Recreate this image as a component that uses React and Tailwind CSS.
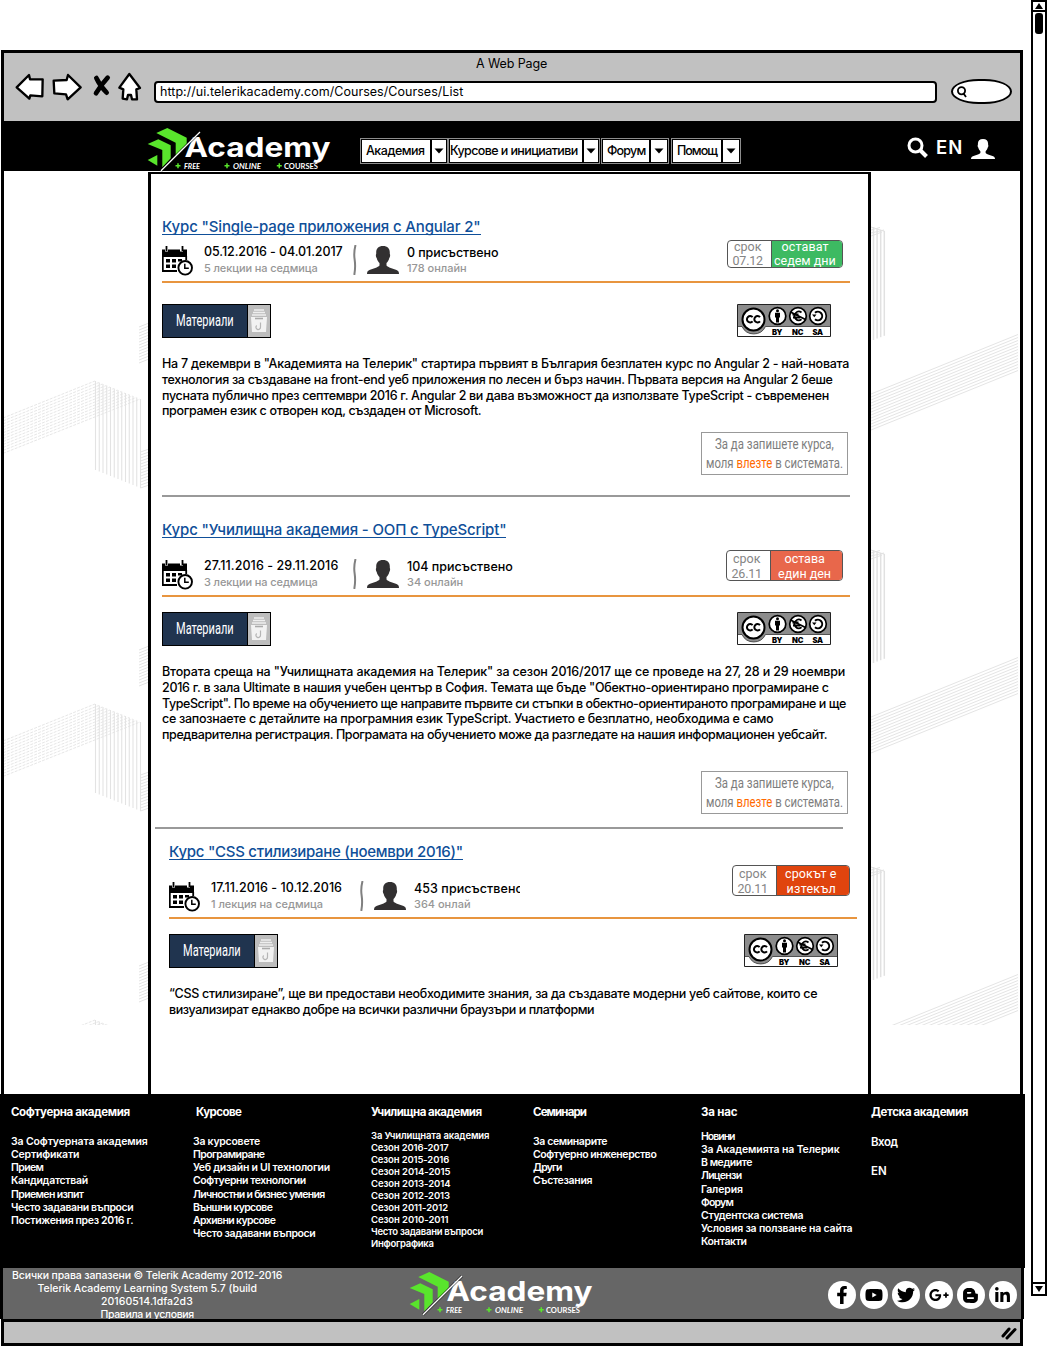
import React, { useLayoutEffect, useRef, useState } from "react";
import {
  FaFacebookF,
  FaYoutube,
  FaTwitter,
  FaGooglePlusG,
  FaBloggerB,
  FaLinkedinIn,
} from "react-icons/fa";

/* A single line of text tracked (or squeezed) to an exact width. */
function Fit({ w, squeeze = false, className = "", children }) {
  const ref = useRef(null);
  const [style, setStyle] = useState({});
  useLayoutEffect(() => {
    const el = ref.current;
    const natural = el.offsetWidth;
    const count = el.textContent.length;
    if (squeeze) setStyle({ transform: `scaleX(${w / natural})` });
    else setStyle({ letterSpacing: `${(w - natural) / count}px` });
  }, [w, squeeze]);
  return (
    <span className={`block whitespace-nowrap ${className}`} style={{ width: w }}>
      <span ref={ref} className="inline-block origin-left align-top" style={style}>
        {children}
      </span>
    </span>
  );
}

function Logo() {
  return (
    <svg width="186" height="46" viewBox="-1 0 186 46" className="block shrink-0">
      <g fill="#59e52c">
        <path d="M8.3 6 19.3 1 38.700 10.700V17L28.700 28H27.700V15.700Z" />
        <path d="M-.3 17 10.300 12.300 22.700 18.300V31.300L14.300 40.300V23Z" />
        <path d="M-.3 33 9.300 28V38.700Z" />
        <path d="M30 36.200v5M27.500 38.700h5M79 36.200v5M76.500 38.700h5M131.300 36.200v5M128.800 38.700h5" stroke="#59e52c" strokeWidth="1.500" />
      </g>
      <g fill="#fff" fontFamily="Lato, sans-serif" fontWeight="700">
        <text x="36.500" y="29.700" fontFamily="Inter, sans-serif" fontSize="27" textLength="146" lengthAdjust="spacingAndGlyphs">Academy</text>
        <g fontSize="8" fontStyle="italic">
          <text x="36" y="41.700" textLength="16" lengthAdjust="spacingAndGlyphs">FREE</text>
          <text x="85" y="41.700" textLength="28" lengthAdjust="spacingAndGlyphs">ONLINE</text>
        </g>
        <text x="136" y="41.700" fontSize="8" textLength="34" lengthAdjust="spacingAndGlyphs">COURSES</text>
      </g>
      <path d="M52 5 13 43.700" stroke="#000" strokeWidth="3" opacity=".5" />
      <path d="M52 5 13 43.700" stroke="#fff" strokeWidth="1.200" />
    </svg>
  );
}

function ToolbarIcons() {
  return (
    <svg width="130" height="30" viewBox="45 96 390 90" className="block">
      <g fill="#fff" stroke="#000" strokeWidth="7" strokeLinejoin="round" strokeLinecap="round">
        <path d="M50 142 87 105 90 118 128 118 127 169 91 166 88 176Z" />
        <path d="M161 122 200 120 204 105 242 142 203 178 198 163 163 160Z" />
        <path d="M388 102 420 144 409 148 411 178 396 178 393 165 384 165 381 178 368 176 370 148 358 143Z" />
      </g>
      <path d="M289 114Q300 138 320 158M323 113Q305 132 288 160" fill="none" stroke="#000" strokeWidth="14" strokeLinecap="round" />
    </svg>
  );
}

function Caret() {
  return (
    <svg width="10" height="6" viewBox="0 0 10 6">
      <path d="M.5.5h9L5 5.500Z" />
    </svg>
  );
}

function Menu({ label, w, className, cell }) {
  return (
    <div className={`flex h-[26px] gap-[2px] border border-[#8c8c8c] bg-black p-px ${className}`}>
      <div className={`flex items-center bg-white ${cell}`}>
        <Fit w={w} className="text-[12.5px] leading-[22px] font-medium">{label}</Fit>
      </div>
      <div className="flex flex-1 items-center justify-center bg-white">
        <Caret />
      </div>
    </div>
  );
}

function Calendar() {
  return (
    <svg width="31" height="30" viewBox="0 0 31 30" className="block shrink-0">
      <path d="M0 3.500h3v2h3v-2h12v2h3v-2h4V11H0Z" />
      <path d="M4.500 0v5M20.500 0v5" stroke="#000" strokeWidth="1.800" />
      <path d="M.8 10v15H15M24.200 10v4" fill="none" stroke="#000" strokeWidth="1.800" />
      <path d="M4 13h4v3.500H4zM10 13h4v3.500h-4zM16 13h4v2.500h-4zM4 18.500h4V22H4zM10 18.500h4V22h-4z" />
      <circle cx="23.200" cy="21.800" r="6.800" fill="#fff" stroke="#000" strokeWidth="1.900" />
      <path d="M22.800 17.800V22.300h4" fill="none" stroke="#000" strokeWidth="1.500" />
    </svg>
  );
}

function Person({ className }) {
  return (
    <svg viewBox="0 0 32 28" preserveAspectRatio="none" className={className} fill="currentColor">
      <path d="M16 0C20.500 0 22.800 2.500 22.800 6.500V8C23.400 8.500 23.200 11 22.300 12C21.800 14.500 20.500 16 19.500 17V19.500C21 21.500 26 22.500 29.500 24C31.500 24.900 32 26 32 28H0C0 26 .5 24.900 2.500 24C6 22.500 11 21.500 12.500 19.500V17C11.500 16 10.200 14.500 9.700 12C8.800 11 8.600 8.500 9.200 8V6.500C9.200 2.500 11.500 0 16 0Z" />
    </svg>
  );
}

function Materials() {
  return (
    <div className="flex h-[34px] w-[109px] border border-black bg-[#bdbdbd]">
      <div className="flex w-[85px] items-center border-r border-black bg-[#20344f] pl-[13px] text-white">
        <Fit w={58} squeeze className="font-['Roboto'] text-[16px] leading-[32px]">Материали</Fit>
      </div>
      <div className="flex flex-1 items-center justify-center">
        <svg width="18" height="24" viewBox="0 0 18 24">
          <path d="M4 1h10M3 3.500h12M2 6h14" stroke="#eee" strokeWidth="1.300" />
          <path d="M1 8h16L16 23H2Z" fill="#f2f2f2" />
          <path d="M5 9.500h8" stroke="#aaa" strokeWidth="1.600" />
          <path d="M10.500 13.500v4.500a2.300 2.300 0 1 1-3.800-1.500" fill="none" stroke="#b5b5b5" strokeWidth="1.200" />
        </svg>
      </div>
    </div>
  );
}

function License() {
  return (
    <svg width="94" height="33" viewBox="0 0 94 33" className="block">
      <path d="M.5.5h93v32H.5Z" fill="#fff" stroke="#222" />
      <path d="M1 1h92v21.500H28.500A13 13 0 0 1 5 22.500H1Z" fill="#8c8c8c" />
      <path d="M1 22.500H5A13 13 0 0 0 28.500 22.500H93" fill="none" stroke="#333" strokeWidth=".8" />
      <g fill="#fff" stroke="#000">
        <circle cx="16.500" cy="15.500" r="11" strokeWidth="2" />
        <circle cx="40.500" cy="12" r="8.300" strokeWidth="1.700" />
        <circle cx="61" cy="12" r="8.300" strokeWidth="1.700" />
        <circle cx="81" cy="12" r="8.300" strokeWidth="1.700" />
      </g>
      <g fill="none" stroke="#000" strokeWidth="2">
        <path d="M15.600 13.200A3.200 3.200 0 1 0 15.600 17.300M23 13.200A3.200 3.200 0 1 0 23 17.300" />
        <path d="M64.500 8.500A4.300 4.300 0 1 0 64.500 15.300M55.500 10.500h6M56 13.500h7" strokeWidth="1.800" />
        <path d="M53.500 8 68.500 15.500" strokeWidth="1.800" />
        <path d="M78 8.800A4.300 4.300 0 1 1 78 15.200" />
      </g>
      <circle cx="40.500" cy="6.700" r="1.500" />
      <path d="M38 8.800h5v4.700h-1V18.500h-3V13.500h-1Z" />
      <path d="M75 10.500h4.500l-2.200 2.800Z" />
      <g fontFamily="Inter, sans-serif" fontWeight="900" fontSize="7.600">
        <text x="35" y="30.500" textLength="10.500">BY</text>
        <text x="55" y="30.500" textLength="11.500">NC</text>
        <text x="75.500" y="30.500" textLength="10.500">SA</text>
      </g>
    </svg>
  );
}

function Deadline({ date, dateW, l1, w1, l2, w2, tone, className }) {
  return (
    <div className={`ml-auto flex overflow-hidden rounded-[4px] border border-[#555] bg-white font-['Roboto'] text-[12.5px] ${className}`}>
      <div className="flex w-[43px] flex-col items-center justify-center pr-[4px] text-[#858585]">
        <Fit w={27}>срок</Fit>
        <Fit w={dateW}>{date}</Fit>
      </div>
      <div className={`flex flex-1 flex-col items-center justify-center border-l border-[#555] pr-[4px] text-white ${tone}`}>
        <Fit w={w1}>{l1}</Fit>
        <Fit w={w2}>{l2}</Fit>
      </div>
    </div>
  );
}

function Course({ c }) {
  return (
    <section className={`flex w-[688px] flex-col ${c.pos}`}>
      <Fit w={c.titleW} className="h-[16px] border-b border-[#0f4f99] text-[15px] leading-[15px] font-medium text-[#0f4f99]">
        {c.title}
      </Fit>
      <div className={`flex h-[32px] ${c.metaGap}`}>
        <div className="pt-[2px]">
          <Calendar />
        </div>
        <div className="ml-[11px] w-[150px]">
          <Fit w={c.dateW} className="text-[12.5px] leading-[15px] font-medium">{c.date}</Fit>
          <Fit w={c.freqW} className="pt-[2px] text-[11px] leading-[15px] font-medium text-[#979797]">{c.freq}</Fit>
        </div>
        <svg width="4" height="30" viewBox="0 0 4 30" className="-ml-[1px] mt-[1px] block">
          <path d="M2.500 0Q.5 8 1.700 15Q2.700 22 1.300 30" fill="none" stroke="#808080" strokeWidth="2" />
        </svg>
        <Person className="mt-[2px] ml-[10px] h-[28px] w-[32px] text-[#323031]" />
        <div className="ml-[8px] pt-[1px]">
          <Fit w={c.liveW} className={`text-[12.5px] leading-[15px] font-medium ${c.liveClip || ""}`}>{c.live}</Fit>
          <Fit w={c.onlineW} className="pt-px text-[11px] leading-[15px] font-medium text-[#979797]">{c.online}</Fit>
        </div>
        <Deadline {...c.deadline} />
      </div>
      <div className="mt-[5px] h-[2px] bg-[#e8953f]" />
      <div className={`flex items-start justify-between pr-[19px] ${c.actionsGap}`}>
        <Materials />
        <License />
      </div>
      <div className="mt-[18px] text-[12.5px] leading-[15.75px] font-medium">
        {c.lines.map(([text, w]) => (
          <Fit key={text} w={w}>{text}</Fit>
        ))}
      </div>
      {c.enrollGap && (
        <>
          <div className={`mr-[2px] flex h-[43px] w-[147px] flex-col items-center justify-center self-end border border-[#999] font-['Roboto'] text-[15px] leading-[18.500px] text-[#7d7d7d] ${c.enrollGap}`}>
            <Fit w={119} squeeze>За да запишете курса,</Fit>
            <Fit w={137} squeeze>
              моля <b className="font-normal text-[#ff6a00]">влезте</b> в системата.
            </Fit>
          </div>
          <div className={`h-[2px] bg-[#999] ${c.ruleGap}`} />
        </>
      )}
    </section>
  );
}

const courses = [
  {
    pos: "ml-[11px] mt-[45px]",
    title: 'Курс "Single-page приложения с Angular 2"',
    titleW: 319,
    metaGap: "mt-[9px]",
    date: "05.12.2016 - 04.01.2017",
    dateW: 139,
    freq: "5 лекции на седмица",
    freqW: 114,
    live: "0 присъствено",
    liveW: 91,
    online: "178 онлайн",
    onlineW: 60,
    deadline: { date: "07.12", dateW: 30, l1: "остават", w1: 47, l2: "седем дни", w2: 62, tone: "bg-[#3dba62]", className: "-mt-[4px] mr-[7px] h-[28px] w-[116px] leading-[14px]" },
    actionsGap: "mt-[21px]",
    lines: [
      ['На 7 декември в "Академията на Телерик" стартира първият в България безплатен курс по Angular 2 - най-новата', 687],
      ["технология за създаване на front-end уеб приложения по лесен и бърз начин. Първата версия на Angular 2 беше", 671],
      ["пусната публично през септември 2016 г. Angular 2 ви дава възможност да използвате TypeScript - съвременен", 667],
      ["програмен език с отворен код, създаден от Microsoft.", 319],
    ],
    enrollGap: "mt-[13px]",
    ruleGap: "mt-[20px]",
  },
  {
    pos: "ml-[11px] mt-[25px]",
    title: 'Курс "Училищна академия - ООП с TypeScript"',
    titleW: 344,
    metaGap: "mt-[20px]",
    date: "27.11.2016 - 29.11.2016",
    dateW: 134,
    freq: "3 лекции на седмица",
    freqW: 114,
    live: "104 присъствено",
    liveW: 106,
    online: "34 онлайн",
    onlineW: 56,
    deadline: { date: "26.11", dateW: 30, l1: "остава", w1: 40, l2: "един ден", w2: 53, tone: "bg-[#e8674b]", className: "-mt-[8px] mr-[7px] h-[31px] w-[117px] leading-[15px]" },
    actionsGap: "mt-[15px]",
    lines: [
      ['Втората среща на "Училищната академия на Телерик" за сезон 2016/2017 ще се проведе на 27, 28 и 29 ноември', 683],
      ['2016 г. в зала Ultimate в нашия учебен център в София. Темата ще бъде "Обектно-ориентирано програмиране с', 667],
      ['TypeScript". По време на обучението ще направите първите си стъпки в обектно-ориентираното програмиране и ще', 684],
      ["се запознаете с детайлите на програмния език TypeScript. Участието е безплатно, необходима е само", 611],
      ["предварителна регистрация. Програмата на обучението може да разгледате на нашия информационен уебсайт.", 665],
    ],
    enrollGap: "mt-[28.25px]",
    ruleGap: "mt-[13px] relative -left-[7px]",
  },
  {
    pos: "ml-[18px] mt-[15px]",
    title: 'Курс "CSS стилизиране (ноември 2016)"',
    titleW: 294,
    metaGap: "mt-[20px]",
    date: "17.11.2016 - 10.12.2016",
    dateW: 131,
    freq: "1 лекция на седмица",
    freqW: 112,
    live: "453 присъствено",
    liveW: 109,
    liveClip: "max-w-[106px] overflow-hidden",
    online: "364 онлай",
    onlineW: 57,
    deadline: { date: "20.11", dateW: 30, l1: "срокът е", w1: 52, l2: "изтекъл", w2: 49, tone: "bg-[#e0440e]", className: "-mt-[15px] mr-[7px] h-[31px] w-[118px] leading-[15px]" },
    actionsGap: "mt-[15px]",
    lines: [
      ["“CSS стилизиране”, ще ви предостави необходимите знания, за да създавате модерни уеб сайтове, които се", 648],
      ["визуализират еднакво добре на всички различни браузъри и платформи", 425],
    ],
  },
];

const steps = Array.from({ length: 13 }, (_, i) => i);

/* Hatched ribbons repeated down the left margin. */
function LeftPattern() {
  return (
    <svg width="144" height="854" viewBox="4 171 144 854" className="block shrink-0" fill="none" stroke="#e3e3e3">
      {[0, 323, 639].map((dy) => (
        <g key={dy} transform={`translate(0 ${dy})`}>
          {steps.map((i) => (
            <g key={i}>
              <path d={`M3 ${418 + i * 2.95}L${95 + i * 3.75} ${381 + i * 1.5}`} strokeDasharray="3 1.2" strokeWidth=".9" />
              <path d={`M${95.5 + i * 3.75} ${381 + i * 1.5}V${470 + i * 1.5}`} strokeWidth="1.1" />
              <path d={`M139 ${327 + i * 3}L149 ${323 + i * 3}`} />
              <path d={`M140.5 ${452 + i * 3}L149 ${449 + i * 3}`} />
            </g>
          ))}
        </g>
      ))}
    </svg>
  );
}

/* Hatched ribbons repeated down the right margin. */
function RightPattern() {
  return (
    <svg width="149" height="854" viewBox="871 171 149 854" className="block shrink-0" fill="none" stroke="#e1e1e1">
      {[0, 323, 640].map((dy) => (
        <g key={dy} transform={`translate(0 ${dy})`}>
          {steps.map((i) => (
            <path key={i} d={`M871 ${394 + i * 3}L1018 ${334.5 + i * 3}`} strokeWidth=".9" />
          ))}
          {[0, 1, 2, 3].map((i) => (
            <path key={i} d={`M${873.5 + i * 3.6} ${227 + i * 1.4}V${340 - i * 1.4}`} strokeWidth="1.5" />
          ))}
          <path d="M871 227 885 231.500M871 230 880 227.500M871 233 884 230M871 236 882 232" />
        </g>
      ))}
    </svg>
  );
}

const columns = [
  {
    head: ["Софтуерна академия", 119],
    list: "pt-[15px] text-[10.5px] leading-[13.15px]",
    items: [["За Софтуерната академия", 137], ["Сертификати", 68], ["Прием", 32], ["Кандидатствай", 77], ["Приемен изпит", 72], ["Често задавани въпроси", 122], ["Постижения през 2016 г.", 122]],
  },
  {
    head: ["Курсове", 45],
    headCls: "pl-[3px]",
    list: "pt-[15px] text-[10.5px] leading-[13.15px]",
    items: [["За курсовете", 67], ["Програмиране", 71], ["Уеб дизайн и UI технологии", 137], ["Софтуерни технологии", 113], ["Личностни и бизнес умения", 132], ["Външни курсове", 79], ["Архивни курсове", 82], ["Често задавани въпроси", 122]],
  },
  {
    head: ["Училищна академия", 111],
    list: "pt-[10px] text-[9.5px] leading-[12px]",
    items: [["За Училищната академия", 118], ["Сезон 2016-2017", 78], ["Сезон 2015-2016", 78], ["Сезон 2014-2015", 79], ["Сезон 2013-2014", 79], ["Сезон 2012-2013", 79], ["Сезон 2011-2012", 77], ["Сезон 2010-2011", 77], ["Често задавани въпроси", 112], ["Инфографика", 63]],
  },
  {
    head: ["Семинари", 53],
    list: "pt-[15px] text-[10.5px] leading-[13.15px]",
    items: [["За семинарите", 74], ["Софтуерно инженерство", 123], ["Други", 29], ["Състезания", 59]],
  },
  {
    head: ["За нас", 36],
    list: "pt-[10px] text-[10.5px] leading-[13.15px]",
    items: [["Новини", 34], ["За Академията на Телерик", 138], ["В медиите", 51], ["Лицензи", 40], ["Галерия", 42], ["Форум", 32], ["Студентска система", 102], ["Условия за ползване на сайта", 151], ["Контакти", 46]],
  },
  {
    head: ["Детска академия", 97],
    list: "pt-[8px] text-[11.5px] leading-[29px]",
    items: [["Вход", 26], ["EN", 16]],
  },
];

const socials = [
  [FaFacebookF, "size-[18px]"],
  [FaYoutube, "size-[18px]"],
  [FaTwitter, "size-[18px]"],
  [FaGooglePlusG, "size-[20px]"],
  [FaBloggerB, "size-[17px]"],
  [FaLinkedinIn, "size-[17px]"],
];

export default function App() {
  return (
    <div className="flex h-[1346px] w-[1047px] overflow-hidden bg-white font-['Inter',sans-serif] text-black">
      <div className="flex w-[1025px] shrink-0 flex-col pt-[50px]">
        <div className="ml-px h-[71px] w-[1022px] border-x-[3px] border-t-[3px] border-black bg-[#c1c1c1]">
          <div className="flex h-[20px] justify-center pt-[1px] pr-[1px]">
            <Fit w={71} className="text-[12.5px] leading-[20px]">A Web Page</Fit>
          </div>
          <div className="flex items-start">
            <div className="ml-[11px] -mt-px">
              <ToolbarIcons />
            </div>
            <div className="mt-[8px] ml-[9px] flex h-[22px] w-[783px] items-center rounded-[4px] border-2 border-black bg-white pl-[4px]">
              <Fit w={303} className="-mt-px text-[12.5px] leading-[18px]">http://ui.telerikacademy.com/Courses/Courses/List</Fit>
            </div>
            <div className="mt-[6px] ml-[14px] flex h-[25px] w-[61px] items-center rounded-[45%/50%] border-2 border-black bg-white pl-[3px]">
              <svg width="12" height="12" viewBox="0 0 12 12" fill="none" stroke="#000" strokeWidth="1.800">
                <circle cx="5.500" cy="4.800" r="3.600" />
                <path d="M7.500 7.500 10 11" />
              </svg>
            </div>
          </div>
        </div>

        <header className="ml-px flex h-[50px] w-[1022px] items-start bg-black">
          <div className="mt-[6px] ml-[146px]">
            <Logo />
          </div>
          <nav className="mt-[17px] ml-[27px] flex">
            <Menu label="Академия" w={59} cell="w-[68px] pl-[4px]" className="w-[88px]" />
            <Menu label="Курсове и инициативи" w={128} cell="w-[132px]" className="w-[152px]" />
            <Menu label="Форум" w={38} cell="w-[46px] pl-[4px]" className="ml-[1px] w-[68px]" />
            <Menu label="Помощ" w={40} cell="w-[48px] pl-[4px]" className="ml-[2px] w-[70px]" />
          </nav>
          <svg width="22" height="22" viewBox="0 0 22 22" fill="none" stroke="#fff" className="mt-[16px] ml-[166px] block">
            <circle cx="8.500" cy="8.500" r="6.500" strokeWidth="3" />
            <path d="M13 13 19.500 19.500" strokeWidth="4" />
          </svg>
          <Fit w={27} className="mt-[14px] ml-[7px] text-[18.500px] leading-[24px] font-semibold text-white">EN</Fit>
          <Person className="mt-[18px] ml-[8px] h-[20px] w-[24px] text-white" />
        </header>

        <main className="ml-px flex h-[923px] w-[1022px] border-x-[3px] border-black">
          <LeftPattern />
          <div className="mt-px w-[723px] shrink-0 border-x-[3px] border-t-2 border-black bg-white">
            {courses.map((c) => (
              <Course key={c.title} c={c} />
            ))}
          </div>
          <RightPattern />
        </main>

        <footer className="grid h-[174px] w-[1025px] grid-cols-[182px_178px_162px_168px_170px_1fr] bg-black pl-[11px] text-white">
          {columns.map((col) => (
            <div key={col.head[0]} className="pt-[10px]">
              <Fit w={col.head[1]} className={`text-[11.5px] leading-[16px] font-bold ${col.headCls || ""}`}>{col.head[0]}</Fit>
              <div className={`font-semibold ${col.list}`}>
                {col.items.map(([text, w]) => (
                  <Fit key={text} w={w}>{text}</Fit>
                ))}
              </div>
            </div>
          ))}
        </footer>

        <div className="flex h-[51px] w-[1024px] items-start border-x-[3px] border-black bg-[#666] text-white">
          <div className="flex w-[288px] flex-col items-center pt-[1px] text-[10.5px] leading-[13px] font-medium">
            <Fit w={270}>Всички права запазени © Telerik Academy 2012-2016</Fit>
            <Fit w={219}>Telerik Academy Learning System 5.7 (build</Fit>
            <Fit w={92}>20160514.1dfa2d3</Fit>
            <Fit w={93}>Правила и условия</Fit>
          </div>
          <div className="mt-[3px] ml-[118px]">
            <Logo />
          </div>
          <div className="mt-[13px] ml-[233px] flex gap-[4.2px]">
            {socials.map(([Icon, size], i) => (
              <span key={i} className="flex size-[28px] items-center justify-center rounded-full bg-white text-black">
                <Icon className={size} />
              </span>
            ))}
          </div>
        </div>

        <div className="ml-px flex h-[27px] w-[1022px] items-center justify-end border-[3px] border-black bg-[#c1c1c1] pr-[3px]">
          <svg width="16" height="14" viewBox="0 0 16 14" fill="none" stroke="#000" strokeWidth="3" strokeLinecap="round">
            <path d="M2 10 8 3M6 12 14 3.500" />
          </svg>
        </div>
      </div>

      <div className="ml-[6px] flex h-[1296px] w-[16px] flex-col items-center border-2 border-black bg-white">
        <div className="flex h-[10px] w-full shrink-0 items-center justify-center border-b-2 border-black">
          <svg width="8" height="6" viewBox="0 0 8 6"><path d="M4 0 8 6H0Z" /></svg>
        </div>
        <div className="mt-[1px] h-[21px] w-[8px] shrink-0 rounded-[3px] bg-black" />
        <div className="mt-auto flex h-[12px] w-full shrink-0 items-center justify-center border-t-2 border-black">
          <svg width="8" height="6" viewBox="0 0 8 6"><path d="M0 0H8L4 6Z" /></svg>
        </div>
      </div>
    </div>
  );
}
